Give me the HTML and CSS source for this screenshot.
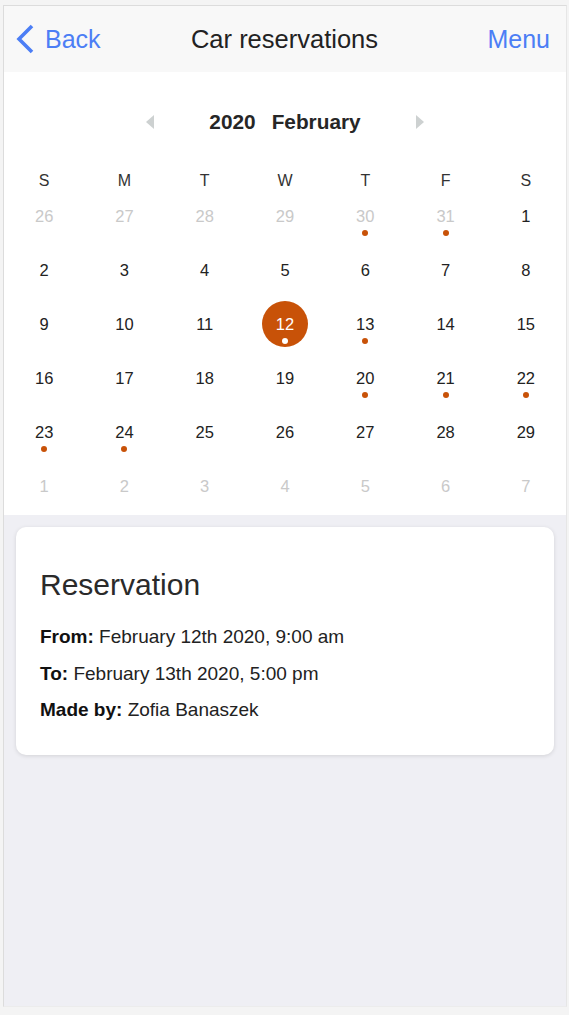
FILE: index.html
```html
<!DOCTYPE html>
<html>
<head>
<meta charset="utf-8">
<link rel="stylesheet" href="styles.css">
</head>
<body>
<div class="frame">
  <header class="navbar">
    <a class="nav-back">
      <svg class="chev" width="20" height="32" viewBox="0 0 20 32"><path d="M17 3 L4 16 L17 29" fill="none" stroke="#4c7ef5" stroke-width="3.6" stroke-linecap="butt" stroke-linejoin="miter"/></svg>
      <span>Back</span>
    </a>
    <div class="nav-title">Car reservations</div>
    <a class="nav-menu">Menu</a>
  </header>

  <section class="calendar">
    <div class="cal-head">
      <span class="arrow arrow-left"></span>
      <div class="cal-title"><span class="year">2020</span><span class="month">February</span></div>
      <span class="arrow arrow-right"></span>
    </div>
    <div class="weekdays">
      <span>S</span><span>M</span><span>T</span><span>W</span><span>T</span><span>F</span><span>S</span>
    </div>
    <div class="days">
      <div class="day muted"><span class="num">26</span></div>
      <div class="day muted"><span class="num">27</span></div>
      <div class="day muted"><span class="num">28</span></div>
      <div class="day muted"><span class="num">29</span></div>
      <div class="day muted"><span class="num">30</span><i class="dot"></i></div>
      <div class="day muted"><span class="num">31</span><i class="dot"></i></div>
      <div class="day"><span class="num">1</span></div>

      <div class="day"><span class="num">2</span></div>
      <div class="day"><span class="num">3</span></div>
      <div class="day"><span class="num">4</span></div>
      <div class="day"><span class="num">5</span></div>
      <div class="day"><span class="num">6</span></div>
      <div class="day"><span class="num">7</span></div>
      <div class="day"><span class="num">8</span></div>

      <div class="day"><span class="num">9</span></div>
      <div class="day"><span class="num">10</span></div>
      <div class="day"><span class="num">11</span></div>
      <div class="day selected"><span class="num">12</span><i class="dot"></i></div>
      <div class="day"><span class="num">13</span><i class="dot"></i></div>
      <div class="day"><span class="num">14</span></div>
      <div class="day"><span class="num">15</span></div>

      <div class="day"><span class="num">16</span></div>
      <div class="day"><span class="num">17</span></div>
      <div class="day"><span class="num">18</span></div>
      <div class="day"><span class="num">19</span></div>
      <div class="day"><span class="num">20</span><i class="dot"></i></div>
      <div class="day"><span class="num">21</span><i class="dot"></i></div>
      <div class="day"><span class="num">22</span><i class="dot"></i></div>

      <div class="day"><span class="num">23</span><i class="dot"></i></div>
      <div class="day"><span class="num">24</span><i class="dot"></i></div>
      <div class="day"><span class="num">25</span></div>
      <div class="day"><span class="num">26</span></div>
      <div class="day"><span class="num">27</span></div>
      <div class="day"><span class="num">28</span></div>
      <div class="day"><span class="num">29</span></div>

      <div class="day muted"><span class="num">1</span></div>
      <div class="day muted"><span class="num">2</span></div>
      <div class="day muted"><span class="num">3</span></div>
      <div class="day muted"><span class="num">4</span></div>
      <div class="day muted"><span class="num">5</span></div>
      <div class="day muted"><span class="num">6</span></div>
      <div class="day muted"><span class="num">7</span></div>
    </div>
  </section>

  <main class="content">
    <div class="card">
      <h2 class="card-title">Reservation</h2>
      <p class="row"><b>From:</b> February 12th 2020, 9:00 am</p>
      <p class="row"><b>To:</b> February 13th 2020, 5:00 pm</p>
      <p class="row"><b>Made by:</b> Zofia Banaszek</p>
    </div>
  </main>
</div>
</body>
</html>
```

FILE: styles.css
```css
* { box-sizing: border-box; }
html, body { margin: 0; padding: 0; }
body {
  background: #f4f4f4;
  font-family: "Liberation Sans", Arial, sans-serif;
  padding: 5px 2px 8px 3px;
  height: 1015px;
}
.frame {
  width: 564px;
  height: 1002px;
  border: 1px solid #dcdcdc;
  border-right-color: #e6e6e6;
  border-bottom-color: #ececec;
  background: #efeff4;
  display: flex;
  flex-direction: column;
}
.navbar {
  height: 66px;
  background: #f8f8f8;
  display: grid;
  grid-template-columns: 1fr auto 1fr;
  align-items: center;
  padding: 0 16px 0 11px;
  font-size: 25px;
}
.nav-back {
  display: flex;
  align-items: center;
  color: #4c7ef5;
  gap: 10px;
  justify-self: start;
}
.chev { display: block; margin-top: -1px; }
.nav-title {
  color: #222;
  font-size: 25.5px;
  margin-left: 4px;
}
.nav-menu { color: #4c7ef5; justify-self: end; }

.calendar {
  background: #fff;
  padding-top: 30px;
  height: 443px;
}
.cal-head {
  height: 40px;
  display: flex;
  align-items: center;
  justify-content: center;
}
.cal-title {
  font-weight: bold;
  font-size: 20.8px;
  color: #262626;
  display: flex;
  gap: 16px;
  margin: 0 55px;
}
.arrow {
  width: 0;
  height: 0;
  border-top: 7px solid transparent;
  border-bottom: 7px solid transparent;
}
.arrow-left { border-right: 8px solid #cdd1d1; }
.arrow-right { border-left: 8px solid #cdd1d1; }

.weekdays {
  display: grid;
  grid-template-columns: repeat(7, 1fr);
  padding-top: 27px;
  line-height: 24px;
  height: 51px;
  font-size: 16px;
  color: #333;
  text-align: center;
}
.days {
  display: grid;
  grid-template-columns: repeat(7, 1fr);
  grid-auto-rows: 54px;
  margin-top: -1px;
}
.day {
  position: relative;
  display: flex;
  justify-content: center;
}
.num {
  width: 46px;
  height: 46px;
  margin-top: 1px;
  border-radius: 50%;
  display: flex;
  align-items: center;
  justify-content: center;
  font-size: 16.5px;
  color: #222;
}
.day.muted .num { color: #c9c9c9; }
.dot {
  position: absolute;
  left: 50%;
  top: 38px;
  width: 6px;
  height: 6px;
  margin-left: -3px;
  border-radius: 50%;
  background: #c85208;
}
.day.selected .num {
  background: #c85208;
  color: #fff;
}
.day.selected .dot { background: #fff; }

.content {
  flex: 1;
  padding: 12px 12px 0 12px;
}
.card {
  background: #fff;
  border-radius: 10px;
  box-shadow: 0 1px 4px rgba(0,0,0,0.12);
  padding: 40px 24px 26px 24px;
}
.card-title {
  margin: 0 0 16px 0;
  font-weight: normal;
  font-size: 30px;
  line-height: 36px;
  color: #2a2a2a;
}
.row {
  margin: 0;
  font-size: 19px;
  line-height: 36.5px;
  color: #222;
}
.row b { color: #111; }
```
